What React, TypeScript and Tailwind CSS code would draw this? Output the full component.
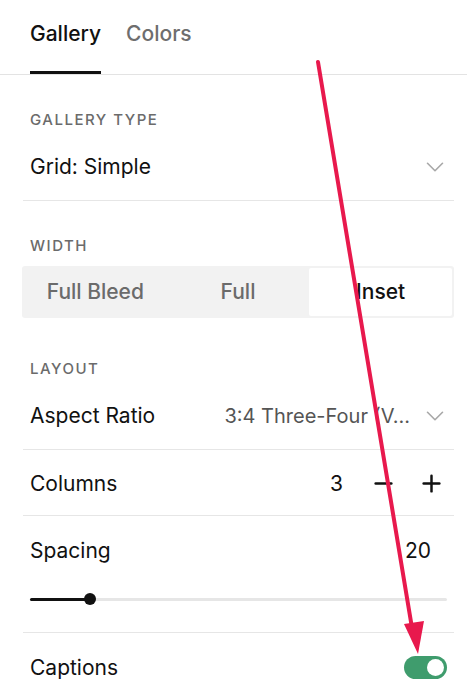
import { ChevronDown, Minus, Plus } from "lucide-react";

const font = { fontFamily: "Inter, 'Noto Sans', sans-serif" };

function Label({ children }: { children: string }) {
  return (
    <div className="text-[15px] tracking-[0.1em] text-[#6b6b6b] font-medium uppercase leading-[14px]">
      {children}
    </div>
  );
}

function Divider() {
  return <div className="h-px bg-[#e6e6e6] ml-[23px] mr-[13px]" />;
}

export default function App() {
  return (
    <div className="relative w-[467px] h-[700px] bg-white overflow-hidden text-[#111]" style={font}>
      {/* Tabs */}
      <div className="flex gap-[25px] px-[30px] border-b border-[#e3e3e3] h-[75px]">
        <div className="flex flex-col justify-between">
          <div className="pt-[21px] text-[21px] font-medium leading-[26px]">Gallery</div>
          <div className="h-[3px] bg-[#111]" />
        </div>
        <div className="pt-[21px] text-[21px] font-medium leading-[26px] text-[#6e6e6e]">Colors</div>
      </div>

      {/* Gallery type */}
      <div className="px-[30px] pt-[38px]">
        <Label>Gallery Type</Label>
      </div>
      <div className="flex items-center justify-between pl-[30px] pr-[17px] pt-[28px] pb-[21px]">
        <span className="text-[21px] leading-[24px]">Grid: Simple</span>
        <ChevronDown className="w-[30px] h-[30px] -my-[3px] text-[#a8a8a8]" strokeWidth={1.3} />
      </div>
      <Divider />

      {/* Width */}
      <div className="px-[30px] pt-[38px] pb-[13px]">
        <Label>Width</Label>
      </div>
      <div className="ml-[22px] mr-[13px] h-[52px] bg-[#f2f2f2] rounded-[3px] p-[2px] grid grid-cols-3">
        <div className="flex items-center justify-center text-[21px] font-medium text-[#6b6b6b]">Full Bleed</div>
        <div className="flex items-center justify-center text-[21px] font-medium text-[#6b6b6b]">Full</div>
        <div className="flex items-center justify-center text-[21px] font-medium text-[#111] bg-white rounded-[2px]">Inset</div>
      </div>

      {/* Layout */}
      <div className="px-[30px] pt-[44px]">
        <Label>Layout</Label>
      </div>
      <div className="flex items-center justify-between pl-[30px] pr-[17px] pt-[28px] pb-[21px]">
        <span className="text-[21px] leading-[24px]">Aspect Ratio</span>
        <div className="flex items-center gap-[10px]">
          <span className="text-[20px] leading-[24px] text-[#555]">3:4 Three-Four (V...</span>
          <ChevronDown className="w-[30px] h-[30px] -my-[3px] text-[#a8a8a8]" strokeWidth={1.3} />
        </div>
      </div>
      <Divider />

      {/* Columns */}
      <div className="flex items-center justify-between pl-[30px] pr-[22px] h-[65px] pt-[1px]">
        <span className="text-[21px] leading-none">Columns</span>
        <div className="flex items-center">
          <span className="text-[21px] leading-none mr-[27px]">3</span>
          <Minus className="w-[27px] h-[27px] mr-[21px]" strokeWidth={2.2} />
          <Plus className="w-[27px] h-[27px]" strokeWidth={2.2} />
        </div>
      </div>
      <Divider />

      {/* Spacing */}
      <div className="flex items-center justify-between pl-[30px] pr-[36px] pt-[23px]">
        <span className="text-[21px] leading-[24px]">Spacing</span>
        <span className="text-[21px] leading-[24px]">20</span>
      </div>
      <div className="relative ml-[30px] mr-[20px] h-[30px] flex items-center mt-[21px]">
        <div className="h-[3px] w-full bg-[#e6e6e6] rounded-full" />
        <div className="absolute left-0 h-[3px] w-[60px] bg-[#111] rounded-full" />
        <div className="absolute left-[54px] w-[12px] h-[12px] rounded-full bg-[#111]" />
      </div>
      <div className="mt-[18px]">
        <Divider />
      </div>

      {/* Captions */}
      <div className="flex items-center justify-between pl-[30px] pr-[20px] h-[68px]">
        <span className="text-[21px] leading-none">Captions</span>
        <div className="w-[43px] h-[23px] rounded-full bg-[#3f9c6d] flex items-center justify-end pr-[3px]">
          <div className="w-[17px] h-[17px] rounded-full bg-white" />
        </div>
      </div>

      {/* annotation arrow */}
      <svg className="absolute inset-0 pointer-events-none" width="467" height="700">
        <line x1="318" y1="62" x2="412" y2="628" stroke="#e8194d" strokeWidth="4" strokeLinecap="round" />
        <polygon points="404,624 424,621 418,654" fill="#e8194d" />
      </svg>
    </div>
  );
}
